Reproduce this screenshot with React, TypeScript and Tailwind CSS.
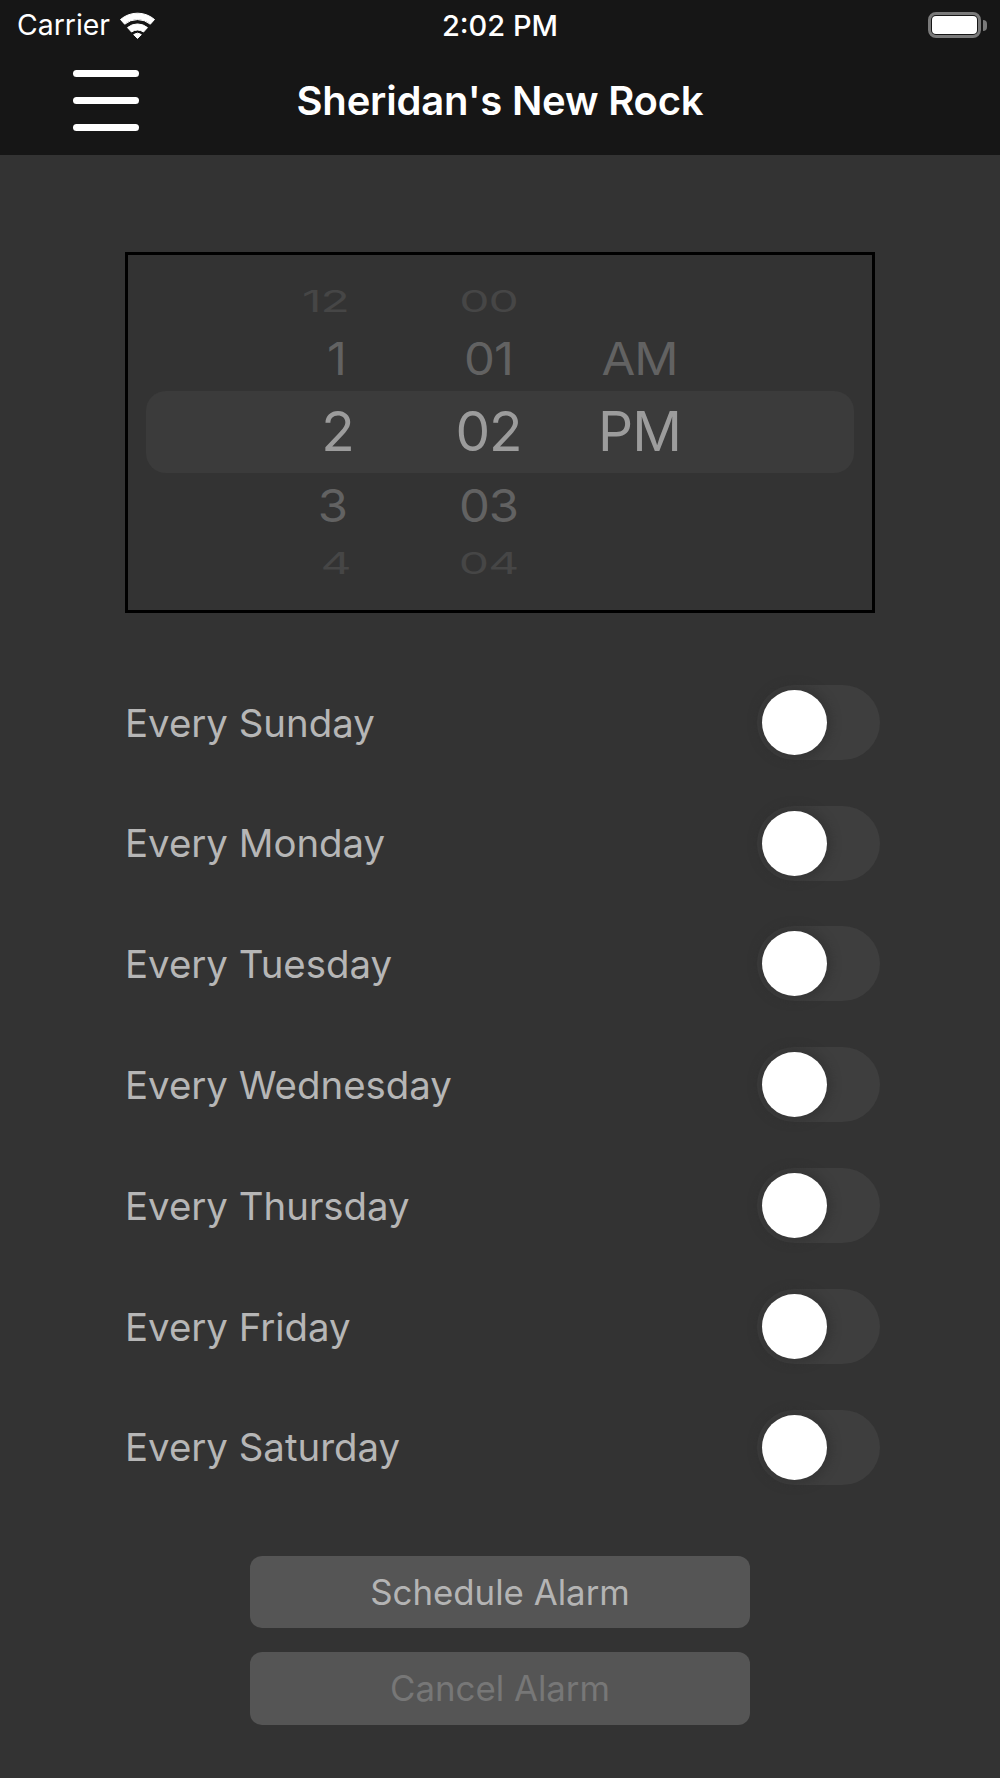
const days = ['Sunday', 'Monday', 'Tuesday', 'Wednesday', 'Thursday', 'Friday', 'Saturday'];

// wheel rows: height of slot, then look of the text in that slot
const slots = [
  { h: 'h-[58px]', text: 'text-[48px] text-[#464646] scale-y-[0.62]' },
  { h: 'h-[56px]', text: 'text-[49px] text-[#626262] scale-y-[0.92]' },
  { h: 'h-[92px] pb-[2px]', text: 'text-[55px] text-[#9c9c9c]' },
  { h: 'h-[54px]', text: 'text-[49px] text-[#626262] scale-y-[0.92]' },
  { h: 'h-[62px]', text: 'text-[48px] text-[#464646] scale-y-[0.62]' },
];

const hours = [
  { label: '12', shift: '-translate-x-[12px]' },
  { label: '1', shift: '-translate-x-[1px]' },
  { label: '2', shift: '' },
  { label: '3', shift: '-translate-x-[5px]' },
  { label: '4', shift: '-translate-x-[2px]' },
];
const minutes = ['00', '01', '02', '03', '04'].map((label) => ({ label, shift: '' }));
const periods = ['', 'AM', 'PM', '', ''].map((label) => ({ label, shift: '' }));

function WheelColumn({ items }: { items: { label: string; shift: string }[] }) {
  return (
    <div className="w-[151px] flex flex-col">
      {items.map((item, i) => (
        <div key={i} className={`${slots[i].h} flex items-center justify-center`}>
          <span className={`leading-none tracking-[-1px] ${slots[i].text} ${item.shift}`}>{item.label}</span>
        </div>
      ))}
    </div>
  );
}

function WifiIcon() {
  return (
    <svg width="37" height="27" viewBox="0 0 36 27" fill="white" stroke="white" strokeWidth="1" strokeLinejoin="round" className="ml-[9px]">
      <path d="M1 7.5 A26 26 0 0 1 35 7.5 L30.8 12.2 A20 20 0 0 0 5.2 12.2 Z" />
      <path d="M8 15.6 A15.5 15.5 0 0 1 28 15.6 L24 20 A10 10 0 0 0 12 20 Z" />
      <path d="M14.2 22.6 A6.2 6.2 0 0 1 21.8 22.6 L18 26.5 Z" />
    </svg>
  );
}

function Battery() {
  return (
    <div className="flex items-center">
      <div className="w-[53px] h-[26px] rounded-[8px] border-[3px] border-[#7a7a7a] p-[1px]">
        <div className="w-full h-full rounded-[4px] bg-white"></div>
      </div>
      <div className="w-[4px] h-[11px] rounded-r-full bg-[#7a7a7a] ml-[2px]"></div>
    </div>
  );
}

function Toggle() {
  return (
    <div className="w-[123px] h-[75px] rounded-full bg-[#3e3e3e] flex items-center pl-[5px]">
      <div className="w-[65px] h-[65px] rounded-full bg-white shadow-[0_0_8px_5px_rgba(48,48,48,0.55)]"></div>
    </div>
  );
}

export default function App() {
  return (
    <div className="w-[1000px] h-[1778px] bg-[#333333] font-['Inter',sans-serif] overflow-hidden">
      {/* Header */}
      <header className="h-[155px] bg-[#161616] text-white">
        <div className="h-[50px] grid grid-cols-3 items-center px-[13px]">
          <div className="flex items-center pl-[4px]">
            <span className="text-[28.4px] leading-none">Carrier</span>
            <WifiIcon />
          </div>
          <span className="text-[29px] leading-none font-medium text-center">2:02 PM</span>
          <div className="flex justify-end">
            <Battery />
          </div>
        </div>
        <div className="h-[105px] grid grid-cols-[1fr_auto_1fr] items-center px-[73px] pb-[4px]">
          <div className="w-[66px] flex flex-col gap-[20px]">
            <div className="h-[7px] rounded-full bg-white"></div>
            <div className="h-[7px] rounded-full bg-white"></div>
            <div className="h-[7px] rounded-full bg-white"></div>
          </div>
          <h1 className="text-[40px] leading-none font-semibold tracking-[-0.2px]">Sheridan's New Rock</h1>
          <div></div>
        </div>
      </header>

      <main className="pt-[97px] pl-[125px] pr-[120px]">
        {/* Time picker */}
        <div className="relative w-[750px] h-[361px] border-[3px] border-black pt-[17px] pl-[134px] flex">
          <div className="absolute top-[136px] left-[18px] right-[18px] h-[82px] rounded-[20px] bg-[#3b3b3b]"></div>
          <div className="relative flex">
            <WheelColumn items={hours} />
            <WheelColumn items={minutes} />
            <WheelColumn items={periods} />
          </div>
        </div>

        {/* Repeat days */}
        <div className="mt-[49px] flex flex-col">
          {days.map((day) => (
            <div key={day} className="h-[120.8px] flex items-center justify-between">
              <span className="text-[38.4px] text-[#b6b6b6] pt-[2px]">Every {day}</span>
              <Toggle />
            </div>
          ))}
        </div>

        {/* Actions */}
        <div className="mt-[48px] w-[500px] ml-[125px] flex flex-col gap-[24px]">
          <button className="h-[72px] rounded-[12px] bg-[#555555] text-[34.8px] text-[#b4b4b4] pt-[1px]">Schedule Alarm</button>
          <button className="h-[73px] rounded-[12px] bg-[#555555] text-[34.8px] text-[#777777] pt-[1px]">Cancel Alarm</button>
        </div>
      </main>
    </div>
  );
}
